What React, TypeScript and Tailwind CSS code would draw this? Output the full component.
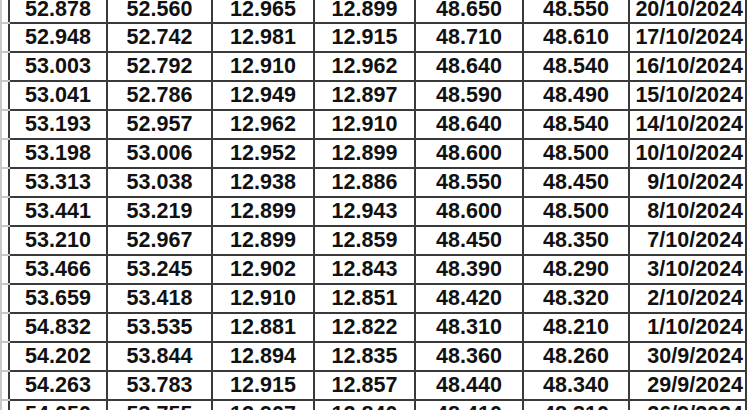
const rows: string[][] = [
  ["52.878", "52.560", "12.965", "12.899", "48.650", "48.550", "20/10/2024"],
  ["52.948", "52.742", "12.981", "12.915", "48.710", "48.610", "17/10/2024"],
  ["53.003", "52.792", "12.910", "12.962", "48.640", "48.540", "16/10/2024"],
  ["53.041", "52.786", "12.949", "12.897", "48.590", "48.490", "15/10/2024"],
  ["53.193", "52.957", "12.962", "12.910", "48.640", "48.540", "14/10/2024"],
  ["53.198", "53.006", "12.952", "12.899", "48.600", "48.500", "10/10/2024"],
  ["53.313", "53.038", "12.938", "12.886", "48.550", "48.450", "9/10/2024"],
  ["53.441", "53.219", "12.899", "12.943", "48.600", "48.500", "8/10/2024"],
  ["53.210", "52.967", "12.899", "12.859", "48.450", "48.350", "7/10/2024"],
  ["53.466", "53.245", "12.902", "12.843", "48.390", "48.290", "3/10/2024"],
  ["53.659", "53.418", "12.910", "12.851", "48.420", "48.320", "2/10/2024"],
  ["54.832", "53.535", "12.881", "12.822", "48.310", "48.210", "1/10/2024"],
  ["54.202", "53.844", "12.894", "12.835", "48.360", "48.260", "30/9/2024"],
  ["54.263", "53.783", "12.915", "12.857", "48.440", "48.340", "29/9/2024"],
  ["54.050", "53.755", "12.907", "12.840", "48.410", "48.310", "26/9/2024"],
];

const widths = [98, 105, 102, 101, 108, 106, 117];

export default function App() {
  return (
    <div className="w-[750px] h-[410px] overflow-hidden bg-white">
      <table
        className="-mt-[4px] border-collapse table-fixed w-[745px] text-[21.5px] font-bold text-[#111] leading-none"
        style={{ fontFamily: '"Liberation Sans", Arial, sans-serif' }}
      >
        <colgroup>
          <col className="w-[8px]" />
          {widths.map((w, i) => (
            <col key={i} style={{ width: w }} />
          ))}
        </colgroup>
        <tbody>
          {rows.map((r, idx) => (
            <tr key={idx} className={idx === 0 ? "h-[26px]" : "h-[29px]"}>
              <td className="border-2 border-[#c8c8c8] border-r-[#3a3a3a] p-0" />
              {r.map((v, i) => (
                <td
                  key={i}
                  className={
                    "border-2 border-[#3a3a3a] p-0 " +
                    (i === 6 ? "text-right pr-[2px]" : "text-center")
                  }
                >
                  {v}
                </td>
              ))}
            </tr>
          ))}
        </tbody>
      </table>
    </div>
  );
}
